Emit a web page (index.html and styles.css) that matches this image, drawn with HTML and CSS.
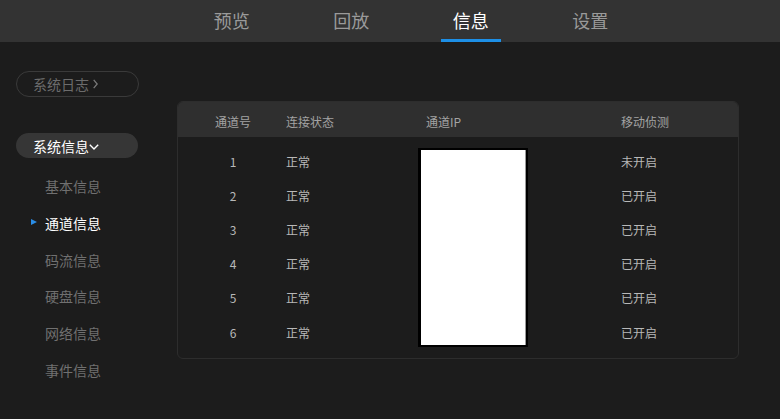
FILE: index.html
```html
<!DOCTYPE html>
<html lang="zh-CN">
<head>
<meta charset="utf-8">
<title>信息</title>
<link rel="stylesheet" href="styles.css">
</head>
<body>
<header class="topbar">
  <nav class="tabs">
    <div class="tab">预览</div>
    <div class="tab">回放</div>
    <div class="tab active">信息</div>
    <div class="tab">设置</div>
  </nav>
</header>
<div class="main">
  <aside class="sidebar">
    <div class="pill pill-outline">系统日志<svg class="chev-right" width="5" height="10" viewBox="0 0 5 10"><path d="M0.7 0.8 L4.2 5 L0.7 9.2" fill="none" stroke="currentColor" stroke-width="1.3"/></svg></div>
    <div class="pill pill-filled">系统信息<svg class="chev-down" width="10" height="6" viewBox="0 0 10 6"><path d="M0.8 0.8 L5 5 L9.2 0.8" fill="none" stroke="currentColor" stroke-width="1.4"/></svg></div>
    <ul class="submenu">
      <li class="item">基本信息</li>
      <li class="item active"><span class="marker"></span>通道信息</li>
      <li class="item">码流信息</li>
      <li class="item">硬盘信息</li>
      <li class="item">网络信息</li>
      <li class="item">事件信息</li>
    </ul>
  </aside>
  <section class="content">
    <div class="table">
      <div class="thead">
        <div class="c1">通道号</div>
        <div class="c2">连接状态</div>
        <div class="c3">通道IP</div>
        <div class="c4">移动侦测</div>
      </div>
      <div class="tbody">
        <div class="ipcell"><div class="redact"></div></div>
        <div class="c1">1</div><div class="c2">正常</div><div class="c4">未开启</div>
        <div class="c1">2</div><div class="c2">正常</div><div class="c4">已开启</div>
        <div class="c1">3</div><div class="c2">正常</div><div class="c4">已开启</div>
        <div class="c1">4</div><div class="c2">正常</div><div class="c4">已开启</div>
        <div class="c1">5</div><div class="c2">正常</div><div class="c4">已开启</div>
        <div class="c1">6</div><div class="c2">正常</div><div class="c4">已开启</div>
      </div>
    </div>
  </section>
</div>
</body>
</html>
```
FILE: styles.css
```css
* { box-sizing: border-box; }
html, body {
  margin: 0;
  padding: 0;
  background: #1c1c1c;
  font-family: "Noto Sans CJK SC", "Noto Sans", sans-serif;
  width: 780px;
  height: 419px;
  overflow: hidden;
}
.topbar {
  height: 42px;
  background: #333333;
}
.tabs {
  display: flex;
  padding-left: 172px;
  height: 42px;
}
.tab {
  position: relative;
  width: 119.5px;
  text-align: center;
  font-size: 18px;
  line-height: 40px;
  color: #9a9a9a;
}
.tab.active {
  color: #ffffff;
}
.tab.active::after {
  content: "";
  position: absolute;
  left: 30px;
  right: 30px;
  bottom: 0;
  height: 3px;
  background: #1d8fe6;
}
.main {
  display: flex;
}
.sidebar {
  width: 177px;
  flex: none;
  padding-top: 29px;
}
.pill {
  margin-left: 16px;
  display: flex;
  align-items: center;
  font-size: 14px;
  padding-left: 16px;
  border-radius: 13px;
}
.pill-outline {
  width: 123px;
  height: 26px;
  border: 1px solid #3a3a3a;
  color: #6c6c6c;
}
.chev-right {
  margin-left: 4px;
  color: #7a7a7a;
}
.pill-filled {
  margin-top: 36px;
  width: 122px;
  height: 25px;
  background: #363636;
  color: #ffffff;
  padding-left: 17px;
}
.chev-down {
  margin-left: 0;
  margin-top: 2px;
  color: #ffffff;
}
.submenu {
  list-style: none;
  margin: 10px 0 0 0;
  padding: 0;
}
.item {
  position: relative;
  height: 36.8px;
  line-height: 36px;
  padding-left: 45px;
  font-size: 14px;
  color: #707070;
}
.item.active {
  color: #ffffff;
}
.marker {
  position: absolute;
  left: 31px;
  top: 14px;
  width: 0;
  height: 0;
  border-top: 3.5px solid transparent;
  border-bottom: 3.5px solid transparent;
  border-left: 6px solid #2a8de6;
}
.content {
  padding-top: 59px;
}
.table {
  width: 562px;
  border: 1px solid #2d2d2d;
  border-radius: 6px;
  overflow: hidden;
  background: #1c1c1c;
}
.thead, .tbody {
  display: grid;
  grid-template-columns: 108px 132px 203px 1fr;
}
.thead {
  height: 35px;
  background: #2f2f2f;
  align-items: center;
  padding-top: 3px;
  font-size: 12px;
  color: #a3a3a3;
}
.tbody {
  grid-template-rows: repeat(6, 34.2px);
  padding: 7px 0 9px 0;
  font-size: 12px;
  color: #b8b8b8;
  align-items: center;
}
.c1 { text-align: center; padding-left: 2px; }
.c2 { padding-left: 0; }
.thead .c3 { padding-left: 8px; }
.c4 { padding-left: 0; }
.ipcell {
  grid-column: 3;
  grid-row: 1 / span 6;
  align-self: start;
}
.redact {
  margin-top: 4px;
  width: 110px;
  height: 199px;
  background: #ffffff;
  border: 2px solid #000000;
  border-left-width: 3px;
  box-shadow: inset -1px 0 0 #9a9a9a;
}
```
